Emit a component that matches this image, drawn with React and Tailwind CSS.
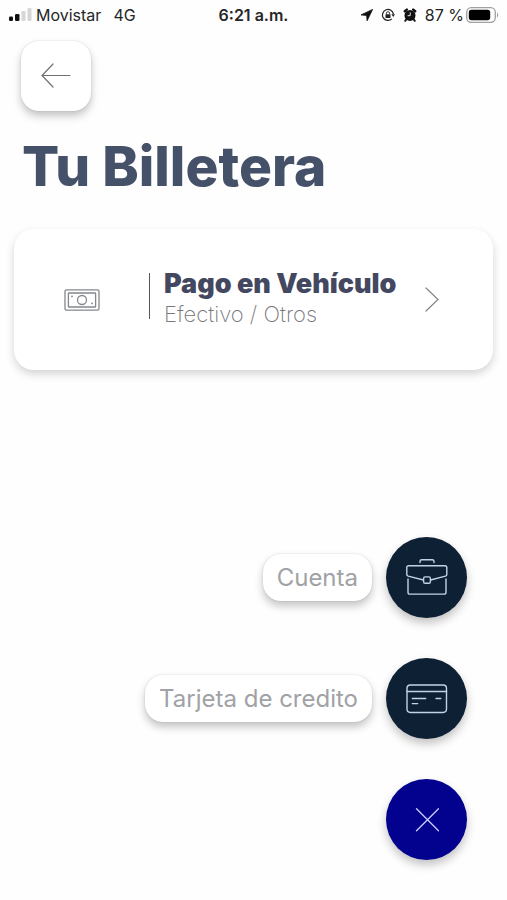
const actions = [
  { label: "Cuenta", icon: BriefcaseIcon },
  { label: "Tarjeta de credito", icon: CardIcon },
];

function SignalIcon() {
  return (
    <svg width="24" height="16" viewBox="0 0 24 16" aria-hidden="true">
      <rect x="1" y="9.5" width="4" height="4.5" rx="1.2" fill="#111" />
      <rect x="7" y="7" width="4.5" height="7" rx="1.2" fill="#111" />
      <rect x="13.5" y="4" width="4" height="10" rx="1.2" fill="#d6d6d6" />
      <rect x="19.5" y="1" width="4" height="13" rx="1.2" fill="#d6d6d6" />
    </svg>
  );
}

function LocationIcon() {
  return (
    <svg width="12" height="12" viewBox="0 0 12 12" aria-hidden="true">
      <path d="M11.6.4 0 5.9l5.6.5.5 5.4z" fill="#111" stroke="#111" strokeWidth=".8" strokeLinejoin="round" />
    </svg>
  );
}

function RotationLockIcon() {
  return (
    <svg width="14" height="14" viewBox="0 0 14 14" fill="none" aria-hidden="true">
      <path d="M10.8 10.9A5.5 5.5 0 1 1 12.4 6.2" stroke="#222" strokeWidth="1.2" />
      <path d="M10.4 6.2h3.6l-1.8 2.7z" fill="#222" />
      <rect x="4.5" y="6.3" width="5" height="3.7" rx=".5" fill="#222" />
      <path d="M5.4 6.4V5.3a1.6 1.6 0 0 1 3.2 0v1.1" stroke="#222" strokeWidth=".9" />
    </svg>
  );
}

function AlarmIcon() {
  return (
    <svg width="14" height="14" viewBox="0 0 14 14" fill="none" aria-hidden="true">
      <circle cx="7" cy="7.4" r="5.5" fill="#111" />
      <path d="M1.8 3.2 3.8 1.6M12.2 3.2 10.2 1.6" stroke="#111" strokeWidth="2.4" strokeLinecap="round" />
      <path d="m3.3 11.4-1.1 1.5M10.7 11.4l1.1 1.5" stroke="#111" strokeWidth="1.8" strokeLinecap="round" />
      <path d="M7.2 4.4v3.3H4.6" stroke="#fff" strokeWidth=".9" />
    </svg>
  );
}

function BatteryIcon() {
  return (
    <svg width="33" height="16" viewBox="0 0 33 16" fill="none" aria-hidden="true">
      <rect x=".7" y=".7" width="28.6" height="14.6" rx="4.5" stroke="#a0a0a0" strokeWidth="1.3" />
      <rect x="2.8" y="2.8" width="21.4" height="10.4" rx="2.6" fill="#000" />
      <path d="M31 5.5c1.6.8 1.6 4.2 0 5z" fill="#a0a0a0" />
    </svg>
  );
}

function ArrowLeftIcon() {
  return (
    <svg width="30" height="26" viewBox="0 0 30 26" fill="none" stroke="#6f6f74" strokeWidth="1.2" strokeLinecap="round" aria-hidden="true">
      <path d="M1 12.5h28M12 1 1 12.5 12 24" />
    </svg>
  );
}

function CashIcon() {
  return (
    <svg width="36" height="22" viewBox="0 0 36 22" fill="none" stroke="#85878d" strokeWidth="1.3" aria-hidden="true">
      <rect x="1" y=".8" width="34" height="20.4" rx="1.6" />
      <rect x="4.4" y="4" width="27.2" height="14" rx=".6" />
      <circle cx="18" cy="11" r="4.5" />
      <path d="M7 7.4h2M8 6.4v2M27 14.4h2M28 13.4v2" strokeWidth=".8" />
    </svg>
  );
}

function ChevronIcon() {
  return (
    <svg width="14" height="25" viewBox="0 0 14 25" fill="none" stroke="#85858a" strokeWidth="1.2" strokeLinecap="round" aria-hidden="true">
      <path d="m1 1 12 11.5L1 24" />
    </svg>
  );
}

function BriefcaseIcon() {
  return (
    <svg width="42" height="38" viewBox="0 0 42 38" fill="none" stroke="#c3d3e6" strokeWidth="1.4" strokeLinecap="round" strokeLinejoin="round" aria-hidden="true">
      <path d="M14 3.5V2.2C14 1.2 14.7.8 15.9.8h10.2c1.2 0 1.9.4 1.9 1.4v1.3" />
      <path d="M17.4 21 2.2 17.1c-.9-.3-1.4-.8-1.4-1.7V8.6c0-1.1.7-1.8 1.8-1.8h36.4c1.1 0 1.8.7 1.8 1.8v6.8c0 .9-.5 1.4-1.4 1.7L24.6 21" />
      <rect x="17.6" y="17.9" width="6.8" height="6.4" rx="1.6" />
      <path d="M2 20v13.2c0 1.2.7 1.9 1.9 1.9h34.2c1.2 0 1.9-.7 1.9-1.9V20" />
    </svg>
  );
}

function CardIcon() {
  return (
    <svg width="42" height="30" viewBox="0 0 42 30" fill="none" stroke="#c3d3e6" strokeWidth="1.4" strokeLinecap="round" aria-hidden="true">
      <rect x="1" y="1" width="39.5" height="27.5" rx="3.4" />
      <path d="M1 7.5h39.5M6.3 14.5h13.4M30 14.5h4.8M6.3 19.6h5.4" />
    </svg>
  );
}

function CloseIcon() {
  return (
    <svg width="24" height="24" viewBox="0 0 24 24" fill="none" stroke="#cdd0ff" strokeWidth="1.3" strokeLinecap="round" aria-hidden="true">
      <path d="m1.5.8 22 22M23.5.8l-22 22" />
    </svg>
  );
}

function StatusBar() {
  return (
    <header className="grid grid-cols-[1fr_auto_1fr] items-center h-7 pt-0.5 px-2 text-base text-neutral-800">
      <div className="flex items-center gap-1">
        <SignalIcon />
        <span>Movistar</span>
        <span className="ml-2">4G</span>
      </div>
      <span className="font-semibold">6:21 a.m.</span>
      <div className="flex items-center justify-end gap-2">
        <LocationIcon />
        <RotationLockIcon />
        <AlarmIcon />
        <div className="flex items-center gap-0.5 whitespace-nowrap">
          <span>87 %</span>
          <BatteryIcon />
        </div>
      </div>
    </header>
  );
}

function PaymentCard() {
  return (
    <button
      type="button"
      className="flex items-center w-full min-h-[141px] pl-[50px] pr-[54px] rounded-[20px] bg-white text-left shadow-[0_4px_8px_rgba(0,0,0,0.17)]"
    >
      <CashIcon />
      <span className="ml-[49px] mb-2 flex items-center gap-3.5">
        <span className="h-[46px] border-l border-[#55555c]" />
        <span className="pt-1 flex flex-col">
          <span className="text-[27px] leading-8 font-black text-[#434860]">Pago en Vehículo</span>
          <span className="text-[22px] leading-7 font-extralight text-[#77777c]">Efectivo / Otros</span>
        </span>
      </span>
      <span className="ml-auto">
        <ChevronIcon />
      </span>
    </button>
  );
}

function ActionRow({ label, icon: Icon }) {
  return (
    <button type="button" className="flex items-center gap-3.5">
      <span className="px-3.5 h-[47px] flex items-center rounded-[18px] bg-white text-2xl text-[#a0a2a6] shadow-[0_5px_9px_rgba(0,0,0,0.23),0_0_2px_rgba(0,0,0,0.14)]">
        {label}
      </span>
      <span className="flex items-center justify-center size-[81px] rounded-full bg-[#0e2034] shadow-[0_5px_10px_rgba(0,0,0,0.24)]">
        <Icon />
      </span>
    </button>
  );
}

const App = () => {
  return (
    <div className="min-h-screen flex flex-col bg-[#fefefe] font-[Inter,sans-serif]">
      <StatusBar />

      <main className="flex-1 flex flex-col pt-[13px] pb-10">
        <button
          type="button"
          aria-label="Atrás"
          className="ml-[21px] flex items-center justify-center size-[70px] rounded-[18px] bg-white shadow-[0_5px_9px_rgba(0,0,0,0.23),0_0_2px_rgba(0,0,0,0.14)]"
        >
          <ArrowLeftIcon />
        </button>

        <h1 className="mt-6 px-[22px] text-[55px] leading-[62px] font-extrabold text-[#455168]">Tu Billetera</h1>

        <div className="mt-8 px-3.5">
          <PaymentCard />
        </div>

        {/* Floating menu */}
        <div className="mt-auto pr-10 flex flex-col items-end gap-10">
          {actions.map((action) => (
            <ActionRow key={action.label} {...action} />
          ))}
          <button
            type="button"
            aria-label="Cerrar"
            className="flex items-center justify-center size-[81px] rounded-full bg-[#02028f] shadow-[0_5px_10px_rgba(0,0,0,0.24)]"
          >
            <CloseIcon />
          </button>
        </div>
      </main>
    </div>
  );
};

export default App;
